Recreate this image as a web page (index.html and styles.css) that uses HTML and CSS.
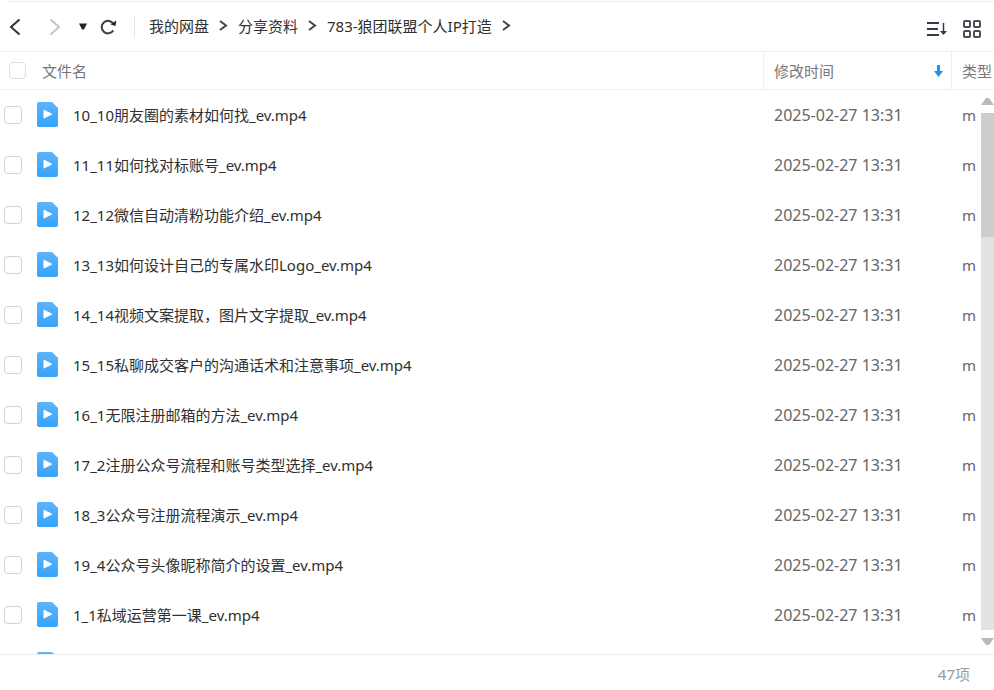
FILE: index.html
```html
<!DOCTYPE html>
<html lang="zh-CN">

<head>
    <meta charset="UTF-8">
    <meta name="viewport" content="width=device-width, initial-scale=1.0">
    <title>我的网盘</title>
    <link rel="stylesheet" href="styles.css">
</head>

<body>
    <header class="toolbar">
        <div class="nav">
            <button class="back" aria-label="后退">
                <svg width="12" height="18" viewBox="0 0 12 18"><path d="M10.500 1.500L2 9l8.500 7.500" fill="none" stroke="#2f3340" stroke-width="2"/></svg>
            </button>
            <button class="forward" aria-label="前进">
                <svg width="12" height="18" viewBox="0 0 12 18"><path d="M1.500 1.500L10 9l-8.500 7.500" fill="none" stroke="#c4c4c6" stroke-width="2"/></svg>
            </button>
            <button class="history" aria-label="历史">
                <svg width="8" height="7" viewBox="0 0 8 7"><path d="M0 .5h8L5 6.500H3z" fill="#20242e"/></svg>
            </button>
            <button class="refresh" aria-label="刷新">
                <svg width="17" height="16" viewBox="0 0 17 16"><path d="M13.300 11.500A6.300 6.300 0 1 1 13.500 5" fill="none" stroke="#363a46" stroke-width="2"/><path d="M16.300 1.500l-.8 5.500-5-1.500z" fill="#20242e"/></svg>
            </button>
        </div>
        <nav class="crumbs">
            <a href="#">我的网盘</a>
            <svg width="9" height="11" viewBox="0 0 9 11"><path d="M1 1l6 4.500L1 10"/></svg>
            <a href="#">分享资料</a>
            <svg width="9" height="11" viewBox="0 0 9 11"><path d="M1 1l6 4.500L1 10"/></svg>
            <a href="#">783-狼团联盟个人IP打造</a>
            <svg width="9" height="11" viewBox="0 0 9 11"><path d="M1 1l6 4.500L1 10"/></svg>
        </nav>
        <div class="views">
            <button aria-label="排序">
                <svg width="20" height="16" viewBox="0 0 20 16" fill="none" stroke="#363a46" stroke-width="2"><path d="M0 2h12M0 8h11M0 14h12"/><path d="M16.500 2v11" stroke-width="1.500"/><path d="M13 10h7l-3.500 4z" fill="#363a46" stroke="none"/></svg>
            </button>
            <button aria-label="网格视图">
                <svg width="18" height="18" viewBox="0 0 18 18" fill="none" stroke="#4a4d58" stroke-width="2"><rect x="1" y="1" width="6" height="6" rx="1"/><rect x="11" y="1" width="6" height="6" rx="1"/><rect x="1" y="11" width="6" height="6" rx="1"/><rect x="11" y="11" width="6" height="6" rx="1"/></svg>
            </button>
        </div>
    </header>

    <main class="list">
        <table>
            <thead>
                <tr>
                    <th class="name">
                        <div class="cell">
                            <input type="checkbox" id="all">
                            <label for="all">文件名</label>
                        </div>
                    </th>
                    <th class="time">
                        <div class="cell">
                            <span>修改时间</span>
                            <svg width="9" height="12" viewBox="0 0 9 12"><path d="M3 0h3v6h3l-4.500 6L0 6h3z" fill="#1296ff"/></svg>
                        </div>
                    </th>
                    <th class="type">类型</th>
                </tr>
            </thead>
            <tbody id="files"></tbody>
        </table>
        <div class="scrollbar">
            <svg width="13" height="8" viewBox="0 0 13 8"><path d="M0 8l5-7h3l5 7z" fill="#b8bbbe"/></svg>
            <div class="track"><div class="thumb"></div></div>
            <svg width="13" height="8" viewBox="0 0 13 8"><path d="M0 0h13L8 7H5z" fill="#b8bbbe"/></svg>
        </div>
    </main>

    <footer class="status">47项</footer>

    <svg width="0" height="0" class="defs">
        <linearGradient id="blue" x1="0" y1="0" x2="0" y2="1">
            <stop offset="0" stop-color="#5cb4fc"/>
            <stop offset="1" stop-color="#37a3fb"/>
        </linearGradient>
    </svg>

    <script>
        var files = [
            "10_10朋友圈的素材如何找_ev.mp4",
            "11_11如何找对标账号_ev.mp4",
            "12_12微信自动清粉功能介绍_ev.mp4",
            "13_13如何设计自己的专属水印Logo_ev.mp4",
            "14_14视频文案提取，图片文字提取_ev.mp4",
            "15_15私聊成交客户的沟通话术和注意事项_ev.mp4",
            "16_1无限注册邮箱的方法_ev.mp4",
            "17_2注册公众号流程和账号类型选择_ev.mp4",
            "18_3公众号注册流程演示_ev.mp4",
            "19_4公众号头像昵称简介的设置_ev.mp4",
            "1_1私域运营第一课_ev.mp4",
            ""
        ];

        files.forEach((name, i) => {
            var tr = document.createElement("tr");
            tr.innerHTML = `
                <td class="name">
                    <div class="cell">
                        <input type="checkbox" id="file${i}" aria-label="选择">
                        <svg width="21" height="25" viewBox="0 0 21 25">
                            <path d="M2 0h13l6 6v17a2 2 0 0 1-2 2H2a2 2 0 0 1-2-2V2a2 2 0 0 1 2-2z" fill="url(#blue)"/>
                            <path d="M6.500 8.500q0-1 1-.6l7 3.600q1 .6 0 1.200l-7 3.600q-1 .4-1-.6z" fill="#fff"/>
                        </svg>
                        <label for="file${i}">${name}</label>
                    </div>
                </td>
                <td class="time">${name ? "2025-02-27 13:31" : ""}</td>
                <td class="type">${name ? "m" : ""}</td>
            `;
            document.getElementById("files").appendChild(tr);
        });
    </script>
</body>

</html>
```
FILE: styles.css
```css
* {
    box-sizing: border-box;
}

body {
    display: flex;
    flex-direction: column;
    height: 100vh;
    margin: 0;
    overflow: hidden;
    background: #fff;
    color: #303030;
    font: 15px/20px "Noto Sans", "Noto Sans CJK SC", sans-serif;
}

svg {
    display: block;
    flex: none;
}

button {
    display: block;
    padding: 0;
    border: 0;
    background: none;
}

.toolbar {
    display: flex;
    align-items: center;
    flex: none;
    height: 52px;
    padding: 2px 13px 0 9px;
    border-bottom: 1px solid #efefef;
    background: linear-gradient(#ededed, #ededed) 8px 1px / 100% 1px no-repeat;
}

.nav {
    display: flex;
    align-items: center;
    height: 22px;
    padding-right: 17px;
    border-right: 1px solid #e6e6e6;
}

.forward {
    margin-left: 28px;
}

.history {
    margin-left: 18px;
}

.refresh {
    margin-left: 13px;
}

.crumbs {
    display: flex;
    align-items: center;
    gap: 10px;
    padding: 0 0 2px 14px;
}

.crumbs a {
    color: #303030;
    text-decoration: none;
}

.crumbs path {
    fill: none;
    stroke: #41444d;
    stroke-width: 2;
}

.views {
    display: flex;
    align-items: center;
    gap: 16px;
    margin-left: auto;
    padding-top: 4px;
}

.list {
    position: relative;
    flex: 1;
    min-height: 0;
    overflow: hidden;
}

table {
    width: 100%;
    table-layout: fixed;
    border-collapse: separate;
    border-spacing: 0;
}

th {
    height: 38px;
    padding: 0 0 0 9px;
    border-bottom: 1px solid #f1f1f1;
    color: #777;
    font-weight: normal;
    text-align: left;
}

td {
    height: 50px;
    padding: 0 0 0 4px;
}

.cell {
    display: flex;
    align-items: center;
}

.time {
    width: 188px;
    padding-left: 11px;
}

.type {
    width: 43px;
    padding-left: 11px;
    white-space: nowrap;
}

th.time,
th.type {
    padding-left: 10px;
    border-left: 1px solid #ededed;
}

th.time .cell {
    justify-content: space-between;
    padding-right: 8px;
}

td.time,
td.type {
    color: #666;
}

td.time {
    font-size: 16px;
}

input[type="checkbox"] {
    appearance: none;
    flex: none;
    width: 18px;
    height: 18px;
    margin: 0;
    border: 1px solid #cfd3d8;
    border-radius: 4px;
    background: #fff;
}

th input[type="checkbox"] {
    width: 17px;
    height: 17px;
    margin-right: 16px;
    border-color: #dedede;
}

td .cell svg {
    margin: 0 15px 1px;
}

.scrollbar {
    position: absolute;
    top: 38px;
    right: 0;
    bottom: 0;
    display: flex;
    flex-direction: column;
    gap: 8px;
    width: 13px;
    padding: 7px 0 8px;
    background: #fff;
}

.track {
    flex: 1;
    background: #e2e2e2;
}

.thumb {
    height: 24%;
    background: #cdcdcd;
}

.status {
    flex: none;
    height: 36px;
    padding: 9px 24px 0 0;
    border-top: 1px solid #ebebeb;
    color: #999;
    text-align: right;
}

.defs {
    position: absolute;
}
```
